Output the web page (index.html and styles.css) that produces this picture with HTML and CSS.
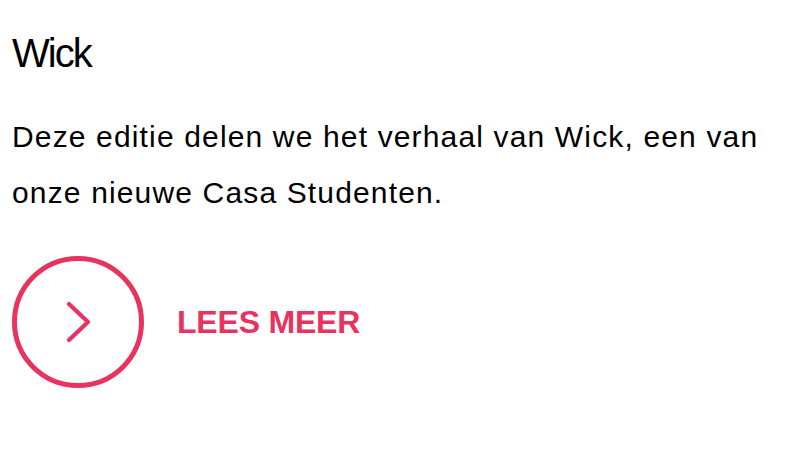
FILE: index.html
```html
<!DOCTYPE html>
<html lang="nl">
<head>
<meta charset="utf-8">
<link rel="stylesheet" href="styles.css">
</head>
<body>
<article class="card">
  <h2 class="title">Wick</h2>
  <p class="text">Deze editie delen we het verhaal van Wick, een van onze nieuwe Casa Studenten.</p>
  <a class="more" href="#">
    <span class="circle">
      <svg width="132" height="132" viewBox="0 0 132 132">
        <circle cx="66" cy="66" r="63.5" fill="none" stroke="#e8335f" stroke-width="5"/>
        <path d="M57 48 L76 66 L57 84" fill="none" stroke="#e8335f" stroke-width="4.2" stroke-linecap="round" stroke-linejoin="round"/>
      </svg>
    </span>
    <span class="label">LEES MEER</span>
  </a>
</article>
</body>
</html>
```
FILE: styles.css
```css
html, body { margin: 0; padding: 0; background: #fff; }
.card { padding: 29px 12px 0 12px; font-family: "Liberation Sans", Arial, sans-serif; color: #000; }
.title { margin: 0; font-weight: 400; font-size: 40px; line-height: 48px; letter-spacing: -2px; }
.text { margin: 32px 0 0 0; font-size: 30px; line-height: 56px; letter-spacing: 1.15px; max-width: 780px; }
.more { display: flex; align-items: center; gap: 33px; margin-top: 35px; text-decoration: none; }
.circle { display: block; width: 132px; height: 132px; flex: none; }
.circle svg { display: block; }
.label { font-weight: 700; font-size: 32px; color: #e8335f; letter-spacing: -0.2px; }
```
